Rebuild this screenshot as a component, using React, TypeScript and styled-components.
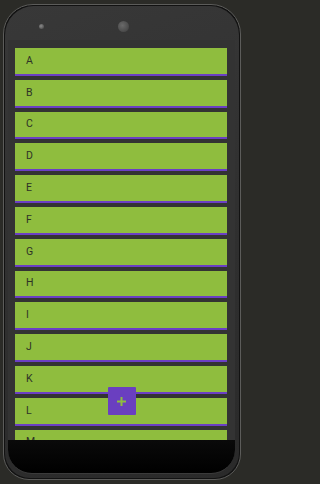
import styled, { createGlobalStyle } from "styled-components";

const GlobalStyle = createGlobalStyle`
  html, body {
    margin: 0;
    padding: 0;
    background: #2b2b27;
  }
  body {
    width: 244px;
    height: 484px;
    overflow: hidden;
    font-family: Roboto, "Liberation Sans", sans-serif;
  }
`;

const Page = styled.div`
  width: 244px;
  height: 484px;
  padding: 4px 3px 0 3px;
  box-sizing: border-box;
  background: #2b2b27;
`;

const Phone = styled.div`
  width: 238px;
  height: 476px;
  box-sizing: border-box;
  border: 1px solid #5c5c5a;
  border-radius: 30px 30px 26px 26px;
  background: #121212;
  padding: 1px;
`;

const Body = styled.div`
  height: 100%;
  box-sizing: border-box;
  border-radius: 29px 29px 25px 25px;
  background: linear-gradient(160deg, #383838 0%, #303030 50%, #2a2a2a 100%);
  padding: 0 4px 3px 3px;
  display: flex;
  flex-direction: column;
`;

const TopBar = styled.div`
  height: 34px;
  display: flex;
  align-items: center;
  padding: 6px 0 0 31px;
  box-sizing: border-box;
`;

const Sensor = styled.span`
  width: 5px;
  height: 5px;
  border-radius: 50%;
  background: radial-gradient(circle at 40% 40%, #8a8a8a, #555 70%);
`;

const Camera = styled.span`
  margin-left: 74px;
  width: 11px;
  height: 11px;
  border-radius: 50%;
  background: radial-gradient(circle at 40% 40%, #6a6a6a, #4a4a4a 70%);
`;

const Screen = styled.div`
  position: relative;
  height: 400px;
  background: #333333;
  overflow: hidden;
  padding: 8px 8px 0 7px;
  box-sizing: border-box;
`;

const List = styled.div`
  display: flex;
  flex-direction: column;
  gap: 4px;
`;

const Row = styled.div`
  flex: none;
  box-sizing: border-box;
  height: 27.8px;
  background: #8fbd3e;
  border-bottom: 2px solid #6b3fc4;
  display: flex;
  align-items: center;
  padding: 0 0 1px 11px;
  font-size: 10.5px;
  color: #2e3327;
`;

const Fab = styled.button`
  position: absolute;
  left: 50%;
  bottom: 25px;
  transform: translateX(-50%);
  width: 28px;
  height: 28px;
  border: none;
  border-radius: 1px;
  background: #6a3fc0;
  display: flex;
  align-items: center;
  justify-content: center;
  padding: 0;
`;

const NavBar = styled.div`
  height: 33px;
  background: linear-gradient(180deg, #0a0a0a 0%, #000 100%);
  border-radius: 0 0 24px 24px;
  border-bottom: 1px solid #3a3a3a;
`;

const letters = "ABCDEFGHIJKLM".split("");

const App = () => {
  return (
    <Page>
      <GlobalStyle />
      <Phone>
        <Body>
          <TopBar>
            <Sensor />
            <Camera />
          </TopBar>
          <Screen>
            <List>
              {letters.map((l) => (
                <Row key={l}>{l}</Row>
              ))}
            </List>
            <Fab>
              <svg width="9" height="9" viewBox="0 0 9 9">
                <path d="M4.5 0v9M0 4.5h9" stroke="#8fbd3e" strokeWidth="2" />
              </svg>
            </Fab>
          </Screen>
          <NavBar />
        </Body>
      </Phone>
    </Page>
  );
};

export default App;
